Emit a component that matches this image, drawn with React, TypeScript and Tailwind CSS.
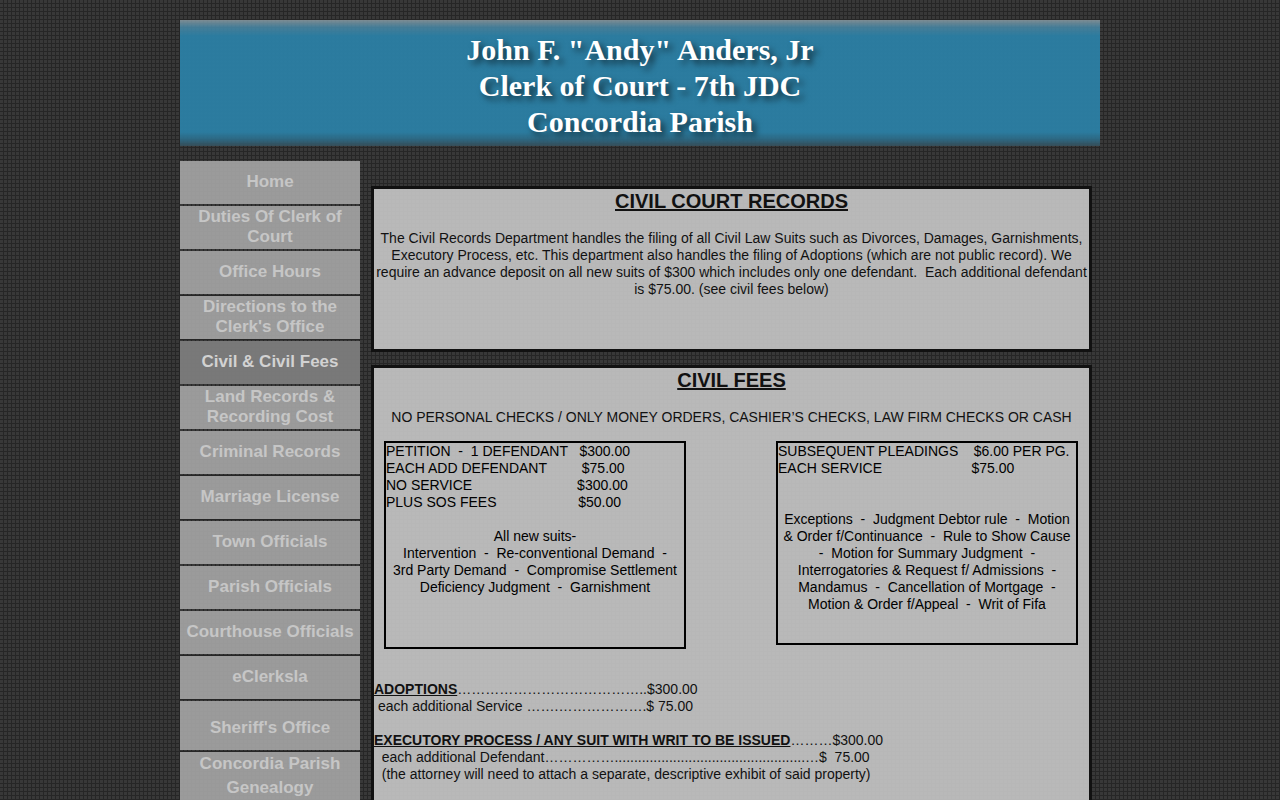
const links = [
  "Home",
  "Duties Of Clerk of Court",
  "Office Hours",
  "Directions to the Clerk's Office",
  "Civil & Civil Fees",
  "Land Records & Recording Cost",
  "Criminal Records",
  "Marriage License",
  "Town Officials",
  "Parish Officials",
  "Courthouse Officials",
  "eClerksla",
];

const current = "Civil & Civil Fees";

function Header() {
  return (
    <header className="bg-[linear-gradient(to_bottom,#8a9ba3d9_0px,#4a8aa8d9_7px,#2b80a6f0_16px,#2b80a6f0_calc(100%-14px),#2c6e8ce6_calc(100%-7px),#37525ed9_100%)] pt-3 pb-1.5">
      <h1 className="text-center font-['Liberation_Serif',serif] text-[30px] leading-9 font-bold text-white [text-shadow:4px_4px_6px_rgba(0,0,0,0.6)]">
        John F. "Andy" Anders, Jr
        <br />
        Clerk of Court - 7th JDC
        <br />
        Concordia Parish
      </h1>
    </header>
  );
}

function Sidebar() {
  return (
    <nav className="w-[180px] shrink-0 text-center text-[17px] font-bold text-[#c6c6c6]">
      <ul className="flex flex-col gap-0.5">
        {links.map((label) => (
          <li key={label}>
            <a
              href="#"
              className={
                label === current
                  ? "flex h-[43px] items-center justify-center bg-[#7c7c7c]/95 px-1 pb-0.5 leading-5 text-[#d2d2d2]"
                  : "flex h-[43px] items-center justify-center bg-[#a6a6a6]/90 px-1 pb-0.5 leading-5"
              }
            >
              {label}
            </a>
          </li>
        ))}
        <li>
          <a
            href="#"
            className="flex h-[49px] items-center justify-center bg-[#a6a6a6]/90 px-3 pt-1 leading-6"
          >
            Sheriff's Office
          </a>
        </li>
        <li>
          <a
            href="#"
            className="flex h-[51px] items-center justify-center bg-[#a6a6a6]/90 px-3 pb-1 leading-6"
          >
            Concordia Parish Genealogy
          </a>
        </li>
      </ul>
    </nav>
  );
}

function CivilRecords() {
  return (
    <section className="min-h-[166px] border-3 border-[#111] bg-[#c8c8c8]/90 text-center">
      <h2 className="mb-[17px] text-xl leading-6 font-bold underline">
        CIVIL COURT RECORDS
      </h2>
      <p>
        The Civil Records Department handles the filing of all Civil Law Suits
        such as Divorces, Damages, Garnishments, Executory Process, etc. This
        department also handles the filing of Adoptions (which are not public
        record). We require an advance deposit on all new suits of $300 which
        includes only one defendant.&nbsp; Each additional defendant is $75.00.
        (see civil fees below)
      </p>
    </section>
  );
}

function CivilFees() {
  return (
    <section className="border-3 border-[#111] bg-[#c8c8c8]/90 pb-10">
      <h2 className="mb-[17px] text-center text-xl leading-6 font-bold underline">
        CIVIL FEES
      </h2>
      <p className="text-center">
        NO PERSONAL CHECKS / ONLY MONEY ORDERS, CASHIER’S CHECKS, LAW FIRM
        CHECKS OR CASH
      </p>

      <div className="mt-[15px] flex items-start justify-between pr-[11px] pl-2.5 text-black">
        <div className="min-h-[208px] w-[302px] border-2 border-black">
          <p className="whitespace-pre">{`PETITION  -  1 DEFENDANT   $300.00
EACH ADD DEFENDANT         $75.00
NO SERVICE                           $300.00
PLUS SOS FEES                     $50.00`}</p>
          <p className="mt-[17px] text-center">
            All new suits-
            <br />
            Intervention&nbsp; -&nbsp; Re-conventional Demand&nbsp; -
            <br />
            3rd Party Demand&nbsp; -&nbsp; Compromise Settlement
            <br />
            Deficiency Judgment&nbsp; -&nbsp; Garnishment
          </p>
        </div>
        <div className="min-h-[204px] w-[302px] border-2 border-black">
          <p className="whitespace-pre">{`SUBSEQUENT PLEADINGS    $6.00 PER PG.
EACH SERVICE                       $75.00`}</p>
          <p className="mt-[34px] text-center">
            Exceptions&nbsp; -&nbsp; Judgment Debtor rule&nbsp; -&nbsp; Motion
            <br />
            &amp; Order f/Continuance&nbsp; -&nbsp; Rule to Show Cause
            <br />
            -&nbsp; Motion for Summary Judgment&nbsp; -
            <br />
            Interrogatories &amp; Request f/ Admissions&nbsp; -
            <br />
            Mandamus&nbsp; -&nbsp; Cancellation of Mortgage&nbsp; -
            <br />
            Motion &amp; Order f/Appeal&nbsp; -&nbsp; Writ of Fifa
          </p>
        </div>
      </div>

      <div className="mt-8 whitespace-pre">
        <p>
          <b className="underline">ADOPTIONS</b>…………………………………..$300.00
        </p>
        <p>{" each additional Service …….……………….$ 75.00"}</p>
        <p className="mt-[17px]">
          <b className="underline">
            EXECUTORY PROCESS / ANY SUIT WITH WRIT TO BE ISSUED
          </b>
          ………$300.00
        </p>
        <p>{"  each additional Defendant…………….................................................…$  75.00"}</p>
        <p>{"  (the attorney will need to attach a separate, descriptive exhibit of said property)"}</p>
      </div>
    </section>
  );
}

export default function App() {
  return (
    <div className="h-screen overflow-hidden bg-[#383838] bg-[linear-gradient(to_right,#262626_1px,transparent_1px),linear-gradient(to_bottom,#262626_1px,transparent_1px)] bg-[size:4px_4px] bg-[position:3px_3px] pt-5 font-['Liberation_Sans',Arial,sans-serif] text-sm leading-[17px] text-[#111]">
      <div className="mx-auto max-w-[920px]">
        <Header />
        <div className="mt-[15px] flex gap-[11px] pr-2">
          <Sidebar />
          <main className="mt-[25px] flex min-w-0 flex-1 flex-col gap-[13px]">
            <CivilRecords />
            <CivilFees />
          </main>
        </div>
      </div>
    </div>
  );
}
